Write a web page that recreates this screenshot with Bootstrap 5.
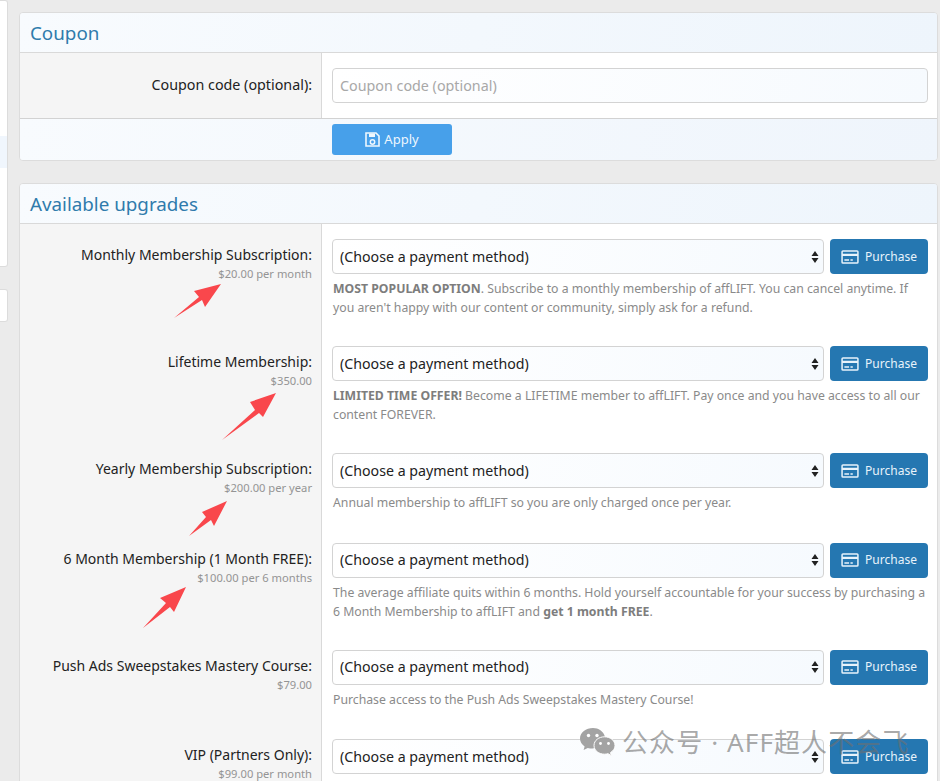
<!DOCTYPE html>
<html lang="en">
<head>
    <meta charset="UTF-8">
    <meta name="viewport" content="width=device-width, initial-scale=1.0">
    <title>Account upgrades</title>
    <link href="https://cdn.jsdelivr.net/npm/bootstrap@5.3.0/dist/css/bootstrap.min.css" rel="stylesheet">
    <style>
        html, body {
            height: 781px;
            overflow: hidden;
        }
        body {
            background-color: #ebebeb;
            font-family: "Noto Sans", "Liberation Sans", sans-serif;
            font-size: 14px;
            color: #222;
            position: relative;
        }
        .page-wrap {
            gap: 11px;
            padding-right: 2px;
        }
        .side-col {
            width: 8px;
            flex: none;
        }
        .side-box {
            background: #fff;
            border: 1px solid #dcdcdc;
            border-left: 0;
            border-radius: 0 3px 3px 0;
        }
        .side-box-main {
            height: 267px;
            padding-top: 135px;
            margin-bottom: 22px;
        }
        .side-box-small {
            height: 33px;
        }
        .side-active {
            height: 32px;
            background: #f0f6fd;
        }
        .main-col {
            padding-top: 12px;
            min-width: 0;
        }
        .block {
            border: 1px solid #dcdcdc;
            border-radius: 4px;
            background: #f5f5f5;
            margin-bottom: 22px;
            overflow: hidden;
        }
        .block-head {
            height: 40px;
            padding: 0 10px;
            font-size: 18.8px;
            line-height: 40px;
            color: #2f7bac;
            background: linear-gradient(100deg, #f8fbfe, #eef5fc);
            border-bottom: 1px solid #d9d9d9;
        }
        .field-label {
            width: 301px;
            flex: none;
            text-align: right;
            padding: 21px 9px 0 10px;
            line-height: 20px;
        }
        .field-price {
            margin-top: -1px;
            font-size: 11.2px;
            line-height: 19px;
            color: #949494;
        }
        .field-value {
            flex: 1;
            min-width: 0;
            background: #fff;
            border-left: 1px solid #d9d9d9;
            padding: 15px 9px 14px 10px;
        }
        .coupon-row .field-label {
            font-size: 14.3px;
            padding-top: 22px;
        }
        .coupon-row .field-value {
            padding-bottom: 15px;
        }
        .upgrade-row {
            min-height: 89.5px;
        }
        .upgrade-row.tall {
            min-height: 107px;
        }
        .buy-line {
            gap: 6px;
        }
        .form-control.pay-input, .form-select.pay-select {
            height: 35px;
            padding: 0 7px;
            font-size: 14.2px;
            color: #222;
            border: 1px solid #d3d3d3;
            border-radius: 4px;
            background-color: #fff;
        }
        .form-control.pay-input {
            font-size: 14.3px;
            background: linear-gradient(100deg, #fff, #f6fafe);
        }
        .form-control.pay-input::placeholder {
            color: #a8a8a8;
        }
        .form-select.pay-select {
            background-image: url("data:image/svg+xml,%3Csvg xmlns='http://www.w3.org/2000/svg' width='8' height='12'%3E%3Cpath d='M4 0L7.500 5H.5zM4 12L.5 7h7z' fill='%23222'/%3E%3C/svg%3E"), linear-gradient(100deg, #fff, #f6fafe);
            background-repeat: no-repeat;
            background-position: right 4px center, 0 0;
            background-size: 8px 12px, 100% 100%;
        }
        .btn.btn-buy {
            width: 98px;
            height: 35px;
            flex: none;
            gap: 6px;
            padding: 0;
            font-size: 12px;
            color: #e8f3fb;
            background: #2577b1;
            border: 0;
            border-radius: 4px;
        }
        .pay-note {
            margin-top: 5px;
            padding-left: 1px;
            font-size: 12.25px;
            line-height: 19px;
            color: #8a8a8a;
        }
        .pay-note strong {
            color: #7d7d7d;
            font-weight: 700;
        }
        .block-foot {
            height: 42px;
            padding: 5px 0 0 312px;
            background: linear-gradient(100deg, #f8fbfe, #eff5fc);
            border-top: 1px solid #d2d2d2;
        }
        .btn.btn-apply {
            width: 120px;
            height: 31px;
            padding: 0;
            font-size: 13px;
            color: #eef7fe;
            background: #47a0ea;
            border: 0;
            border-radius: 3px;
        }
        .arrow-layer {
            position: absolute;
            left: 0;
            top: 0;
            pointer-events: none;
        }
        .watermark {
            position: absolute;
            left: 580px;
            top: 725px;
            gap: 7px;
            font-family: "Noto Sans", "Noto Sans CJK SC", sans-serif;
            font-size: 26px;
            line-height: 34px;
            letter-spacing: 1.1px;
            color: rgba(112, 112, 112, .62);
            white-space: nowrap;
        }
    </style>
</head>
<body>
    <div class="d-flex page-wrap">
        <div class="side-col">
            <div class="side-box side-box-main"><div class="side-active"></div></div>
            <div class="side-box side-box-small"></div>
        </div>

        <div class="main-col flex-grow-1">
            <div class="block">
                <div class="block-head">Coupon</div>
                <div class="d-flex coupon-row">
                    <div class="field-label">Coupon code (optional):</div>
                    <div class="field-value">
                        <input type="text" class="form-control pay-input" placeholder="Coupon code (optional)">
                    </div>
                </div>
                <div class="block-foot">
                    <button class="btn btn-apply d-inline-flex align-items-center justify-content-center gap-1">
                        <svg width="15" height="15" viewBox="0 0 15 15"><path d="M1 1h10l3 3v10H1z" fill="none" stroke="currentColor" stroke-width="1.6"/><path d="M4 1.500h6v3.500H4z" fill="currentColor"/><circle cx="7.500" cy="10" r="2.200" fill="none" stroke="currentColor" stroke-width="1.500"/></svg>
                        Apply
                    </button>
                </div>
            </div>

            <div class="block mb-0">
                <div class="block-head">Available upgrades</div>
                <div id="upgradeRows"></div>
            </div>
        </div>
    </div>

    <svg class="arrow-layer" width="940" height="781" fill="#f9474c">
        <polygon points="221,284 194,291 199,297 174,318 202,300 205,307"/>
        <polygon points="276,393 250,402 255,410 222,440 259,413 263,417"/>
        <polygon points="227,501 202,512 206,517 189,536 211,520 214,526"/>
        <polygon points="186,587 160,598 166,603 143,628 170,607 174,612"/>
    </svg>

    <div class="watermark d-flex align-items-center">
        <svg width="35" height="29" viewBox="0 0 35 29" fill="#a3a3a3">
            <path d="M13 0C6 0 0 4.500 0 10.500c0 3.300 1.800 6 4.600 8l-1 3.600 4.200-2.200c1.500.4 3 .6 4.600.6 3 0 12-8 12.300-12.500C23.300 3.300 18.600 0 13 0z"/>
            <path d="M35 17.500C35 12.300 30 8.800 24.500 8.800S14 12.300 14 17.500s5 8.700 10.500 8.700c1.200 0 2.400-.2 3.500-.5l3.400 2-.9-3.100c2.700-1.800 4.500-4 4.500-6.600z" stroke="#fff" stroke-width="1"/>
            <circle cx="8.500" cy="7.500" r="1.700" fill="#fff"/>
            <circle cx="17" cy="7.500" r="1.700" fill="#fff"/>
            <circle cx="20.500" cy="15.500" r="1.400" fill="#fff"/>
            <circle cx="28.500" cy="15.500" r="1.400" fill="#fff"/>
        </svg>
        <span>公众号 · AFF超人不会飞</span>
    </div>

    <script>
        const upgrades = [
            { nome: "Monthly Membership Subscription:", preco: "$20.00 per month", alto: true,
              nota: "<strong>MOST POPULAR OPTION</strong>. Subscribe to a monthly membership of affLIFT. You can cancel anytime. If you aren't happy with our content or community, simply ask for a refund." },
            { nome: "Lifetime Membership:", preco: "$350.00", alto: true,
              nota: "<strong>LIMITED TIME OFFER!</strong> Become a LIFETIME member to affLIFT. Pay once and you have access to all our content FOREVER." },
            { nome: "Yearly Membership Subscription:", preco: "$200.00 per year",
              nota: "Annual membership to affLIFT so you are only charged once per year." },
            { nome: "6 Month Membership (1 Month FREE):", preco: "$100.00 per 6 months", alto: true,
              nota: "The average affiliate quits within 6 months. Hold yourself accountable for your success by purchasing a 6 Month Membership to affLIFT and <strong>get 1 month FREE</strong>." },
            { nome: "Push Ads Sweepstakes Mastery Course:", preco: "$79.00",
              nota: "Purchase access to the Push Ads Sweepstakes Mastery Course!" },
            { nome: "VIP (Partners Only):", preco: "$99.00 per month", nota: "" }
        ];

        const iconeCartao = `<svg width="18" height="14" viewBox="0 0 19 15"><rect x="1" y="1" width="17" height="13" rx="1" fill="none" stroke="currentColor" stroke-width="1.6"/><path d="M1 4h17v2.500H1zM3.500 10h5v1.500h-5zM10 10h2.500v1.500H10z" fill="currentColor"/></svg>`;

        document.getElementById("upgradeRows").innerHTML = upgrades.map(item => `
            <div class="d-flex upgrade-row ${item.alto ? "tall" : ""}">
                <div class="field-label">
                    <div>${item.nome}</div>
                    <div class="field-price">${item.preco}</div>
                </div>
                <div class="field-value">
                    <div class="d-flex buy-line">
                        <select class="form-select pay-select"><option>(Choose a payment method)</option></select>
                        <button class="btn btn-buy d-flex align-items-center justify-content-center">${iconeCartao}Purchase</button>
                    </div>
                    ${item.nota ? `<div class="pay-note">${item.nota}</div>` : ""}
                </div>
            </div>
        `).join("");
    </script>
    <script src="https://cdn.jsdelivr.net/npm/bootstrap@5.3.0/dist/js/bootstrap.bundle.min.js"></script>
</body>
</html>
